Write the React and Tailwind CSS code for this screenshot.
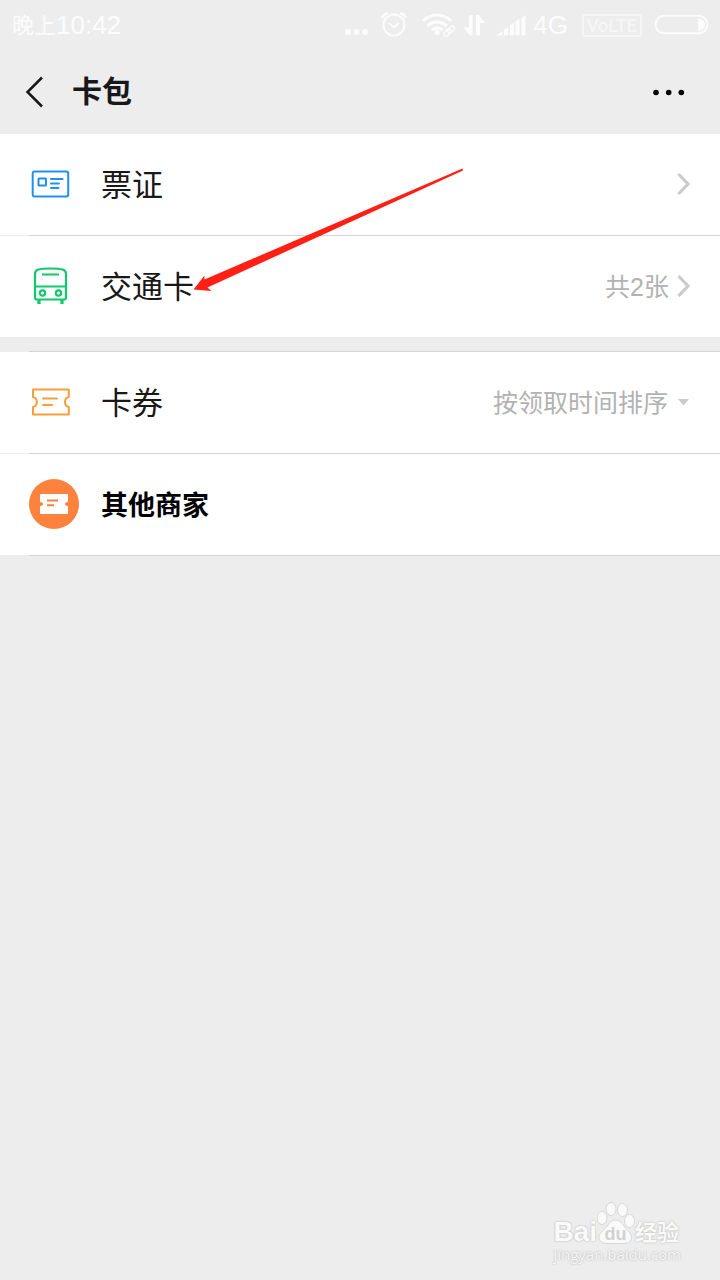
import React, { useState } from 'react';

const IdCardIcon = () => (
  <svg className="ml-[2px] h-7 w-10" viewBox="0 0 40 28" fill="none" stroke="#1e90f5" strokeWidth="2" strokeLinecap="round">
    <rect x="1.700" y="1.500" width="35.500" height="25" rx="2" />
    <rect x="7.500" y="8.500" width="7.500" height="7" rx=".5" />
    <path d="M20 9h11.500M20 13.500h8M20 18h7.500" />
  </svg>
);

const BusIcon = () => (
  <svg className="ml-[2px] h-10 w-10" viewBox="0 0 40 40" fill="none" stroke="#0ecb69" strokeWidth="2.200">
    <path d="M4 30V8c0-4.500 4-5.500 15.500-5.500S35 3.500 35 8v23.500a2 2 0 0 1-2 2H6a2 2 0 0 1-2-2z" />
    <path d="M4 20.500h31M11 8.500h17" />
    <circle cx="11.500" cy="27" r="2.700" />
    <circle cx="27.500" cy="27" r="2.700" />
    <path d="M8 34v4M31 34v4" strokeWidth="3.200" />
  </svg>
);

const TicketIcon = () => (
  <svg className="ml-[2px] h-7 w-10" viewBox="0 0 40 28" fill="none" stroke="#fa9d3b" strokeWidth="2">
    <path
      d="M2 1.500h35.800v7.500c-2.500.5-3.800 2.800-3.800 5s1.300 4.500 3.800 5v7.500H2v-7.500c2.500-.5 3.800-2.800 3.800-5S4.500 9.500 2 9z"
      strokeLinejoin="round"
    />
    <path d="M12 10.500h14M12 17h9" strokeLinecap="round" />
  </svg>
);

const MerchantIcon = () => (
  <span className="flex h-[50px] w-[50px] items-center justify-center rounded-full bg-[#fc823e]">
    <svg className="h-5 w-7" viewBox="0 0 28 20">
      <path
        d="M1 0h26q1 0 1 1v7c-2 0-3 1-3 2s1 2 3 2v7q0 1-1 1H1q-1 0-1-1v-7c2 0 3-1 3-2S2 8 0 8V1q0-1 1-1z"
        fill="#fff"
      />
      <path d="M7 6.500h11M7 11.300h7" stroke="#fc823e" strokeWidth="2" />
    </svg>
  </span>
);

const Chevron = () => (
  <svg className="ml-2 h-6 w-[14px]" viewBox="0 0 14 24" fill="none" stroke="#cbcbcb" strokeWidth="3.200">
    <path d="M1.500 2L11 12L1.500 22" />
  </svg>
);

const StatusBar = () => (
  <div className="flex h-[50px] items-center justify-between pl-3 pr-[11px] text-[26px] text-[#fcfcfc]">
    <div className="flex items-center">
      <span className="text-[22px]">晚上</span>
      <span>10:42</span>
    </div>
    <div className="flex items-center">
      <svg className="h-8 w-[184px]" viewBox="0 0 184 32" fill="none" stroke="#fcfcfc">
        <g fill="#fcfcfc" stroke="none">
          <circle cx="5" cy="23" r="3" />
          <circle cx="13.500" cy="23" r="3" />
          <circle cx="22" cy="23" r="3" />
        </g>
        <circle cx="51" cy="16" r="10.500" strokeWidth="2" />
        <path d="M46 14l5 4.500 5-4.500" strokeWidth="2" />
        <path d="M39 9c1-2.500 3-4.200 6-5M63 9c-1-2.500-3-4.200-6-5" strokeWidth="2.500" />
        <path d="M80 12c7.500-8 20.500-8 28 0M84.500 17c5-5.500 14-5.500 19 0M89 21c3-3 7.500-3 10.500 0" strokeWidth="3.200" />
        <circle cx="94" cy="23.500" r="2.700" fill="#fcfcfc" stroke="none" />
        <g strokeWidth="1.300" transform="rotate(-42 106 22)">
          <rect x="99.500" y="20" width="8" height="4.500" rx="2.200" />
          <rect x="104.500" y="20" width="8" height="4.500" rx="2.200" />
        </g>
        <path d="M129.500 6v20.500H127l-6.500-8h5.500V6zM133 26.500V6h2.500l6.500 8h-5v12.500z" fill="#fcfcfc" stroke="none" />
        <path
          d="M153 26.500l6.500-4.500v4.500zM161 21l4-3v8.500h-4zM167 16.500l4-3v13h-4zM172.500 12.500l4-3v17h-4zM178.500 9l4-3v20.500h-4z"
          fill="#fcfcfc"
          stroke="none"
        />
      </svg>
      <span className="ml-[6px]">4G</span>
      <span className="ml-[14px] flex h-[23px] items-center rounded-xs border-2 border-[#f6f6f6] px-[3px] font-[Roboto,sans-serif] text-[18px] font-medium text-[#f6f6f6]">
        VoLTE
      </span>
      <svg className="ml-3 h-5 w-[55px]" viewBox="0 0 55 20" fill="none">
        <rect x="1.500" y=".8" width="52" height="17.500" rx="8.700" stroke="#fcfcfc" strokeWidth="2" />
        <path d="M44 3.500c5 0 7 2.500 7 6s-2 6-7 6z" fill="#fcfcfc" />
      </svg>
    </div>
  </div>
);

const Header = () => (
  <header className="flex h-[84px] items-center justify-between pl-6 pr-[34px]">
    <div className="flex items-center">
      <button type="button" aria-label="返回">
        <svg className="h-8 w-5" viewBox="0 0 20 32" fill="none" stroke="#181818" strokeWidth="2.500">
          <path d="M18 1.500L3.500 16L18 30.500" />
        </svg>
      </button>
      <h1 className="ml-7 text-[30px] leading-10 font-bold text-[#181818]">卡包</h1>
    </div>
    <button type="button" aria-label="更多">
      <svg className="h-8 w-[34px]" viewBox="0 0 34 32">
        <circle cx="4" cy="16.500" r="2.800" />
        <circle cx="16.700" cy="16.500" r="2.800" />
        <circle cx="29.300" cy="16.500" r="2.800" />
      </svg>
    </button>
  </header>
);

const Divider = () => <div className="ml-[29px] h-px bg-[#d5d5d5]" />;

const rowStyle = 'flex h-[101px] items-center bg-white px-[29px] pb-px';
const iconStyle = 'w-[72px] shrink-0';
const labelStyle = 'grow pt-[3px] text-[31px] leading-10 text-[#181818]';
const hintStyle = 'pt-[2px] text-[25px] leading-10 text-[#b2b2b2]';

const Watermark = () => (
  <footer className="mt-auto flex flex-col self-end pr-[39px] pb-4 text-[#fafafa] [text-shadow:0_0_2px_#aaa]">
    <div className="flex h-[42px] items-end">
      <span className="font-['Liberation_Sans',sans-serif] text-[28px] leading-6 font-bold">Bai</span>
      <svg className="h-[42px] w-[38px]" viewBox="0 0 38 42" fill="#fafafa" stroke="#d6d6d6">
        <ellipse cx="5" cy="16" rx="5" ry="6.500" />
        <ellipse cx="14" cy="7" rx="5" ry="6.500" />
        <ellipse cx="25.500" cy="8" rx="5" ry="6.500" />
        <ellipse cx="32.500" cy="19" rx="5" ry="6.500" />
        <path d="M18.500 18c5 0 7 4 10 8s6 5.500 6 9.500-3 6-7 6H10c-5 0-8-2.500-8-6.500s4-6 7-9.500 4.500-7.500 9.500-7.500z" />
        <text
          x="18.500"
          y="37.500"
          textAnchor="middle"
          fill="#d2d2d2"
          stroke="none"
          className="font-['Liberation_Sans',sans-serif] text-[18px] font-bold [text-shadow:none]"
        >
          du
        </text>
      </svg>
      <span className="text-[22px] leading-[22px] font-bold">经验</span>
    </div>
    <span className="font-['Open_Sans',sans-serif] text-[15px] leading-5 text-[#f6f6f6]">jingyan.baidu.com</span>
  </footer>
);

const App = () => {
  const [sort, setSort] = useState('time');

  return (
    <div className="relative flex min-h-screen flex-col bg-[#ededed] font-['Liberation_Sans','Noto_Sans_CJK_SC',sans-serif]">
      <StatusBar />
      <Header />
      <main>
        <a href="#tickets" className={rowStyle}>
          <span className={iconStyle}>
            <IdCardIcon />
          </span>
          <span className={labelStyle}>票证</span>
          <Chevron />
        </a>
        <Divider />
        <a href="#transit" className={rowStyle}>
          <span className={iconStyle}>
            <BusIcon />
          </span>
          <span className={labelStyle}>交通卡</span>
          <span className={hintStyle}>共2张</span>
          <Chevron />
        </a>
        <div className="h-[14px]" />
        <Divider />
        <div className={rowStyle}>
          <span className={iconStyle}>
            <TicketIcon />
          </span>
          <label htmlFor="sort" className={labelStyle}>
            卡券
          </label>
          <select
            id="sort"
            value={sort}
            onChange={(e) => setSort(e.target.value)}
            className={`appearance-none bg-transparent ${hintStyle}`}
          >
            <option value="time">按领取时间排序</option>
          </select>
          <svg className="ml-2 h-2 w-[14px]" viewBox="0 0 14 8" fill="#cbcbcb">
            <path d="M1 1h11l-5.500 6.500z" />
          </svg>
        </div>
        <Divider />
        <a href="#merchants" className={rowStyle}>
          <span className={iconStyle}>
            <MerchantIcon />
          </span>
          <span className="pt-[3px] text-[27px] leading-10 font-bold text-black">其他商家</span>
        </a>
        <Divider />
      </main>
      <Watermark />

      <svg
        className="pointer-events-none absolute top-[165px] left-[190px] h-[130px] w-[280px]"
        viewBox="0 0 280 130"
        fill="#ff2015"
      >
        <path d="M272.500 3.500L273 5.500L17.500 122.500L21.500 126L3.500 124.500L14.500 110.500L14.500 114.500Z" />
      </svg>
    </div>
  );
};

export default App;
